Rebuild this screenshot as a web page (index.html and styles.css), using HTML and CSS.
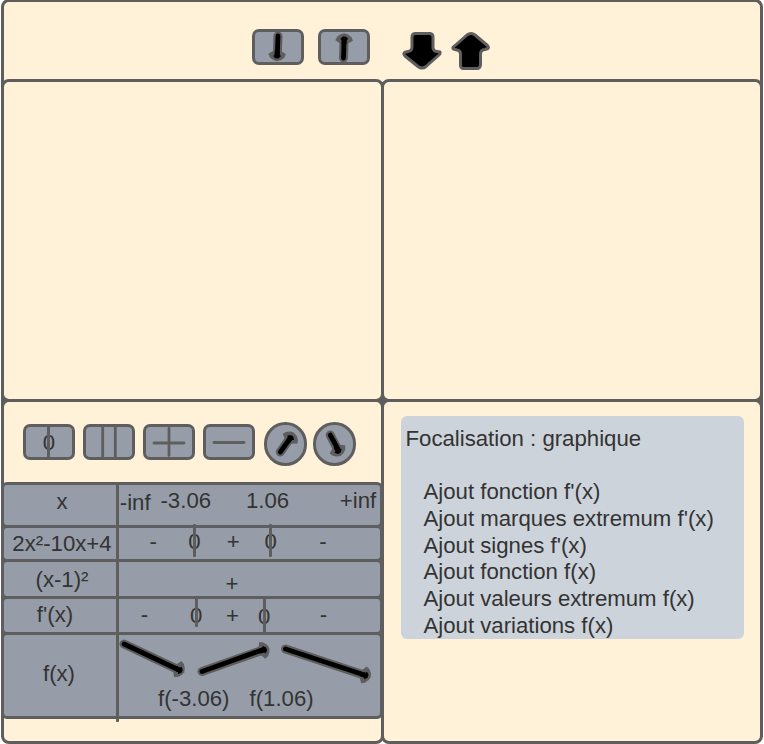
FILE: index.html
```
<!DOCTYPE html>
<html lang="fr">
<head>
<meta charset="utf-8">
<title>Tableau de variations</title>
<link rel="stylesheet" href="styles.css">
</head>
<body>
<svg class="defs" width="0" height="0" aria-hidden="true">
  <defs>
    <g id="head-edge"><path d="M-7 -8.800L-3.500 -7.200Q0 -4 0.300 0Q0 4 -3.500 7.200L-7 8.800L-10 4V-4Z"/></g>
    <g id="head-fill"><path d="M-9 -2.400L-5 -2.600L-4 -4L-1.500 -1.500V1.500L-4 4L-5 2.600L-9 2.400Z"/></g>
  </defs>
</svg>
<main class="app">
  <header class="panel top">
    <button class="btn"><svg viewBox="252 29 52 36"><path class="edge" d="M278 36L277.300 55"/><use class="hd" href="#head-edge" transform="translate(277 61) rotate(91)"/><path class="ink" d="M278 36L277.300 54"/><use href="#head-fill" transform="translate(277 60) rotate(91)"/></svg></button>
    <button class="btn up"><svg viewBox="318 29 52 36"><path class="edge" d="M343.500 58L344 40"/><use class="hd" href="#head-edge" transform="translate(344.300 33.500) rotate(-89)"/><path class="ink" d="M343.500 58L344 41"/><use href="#head-fill" transform="translate(344.300 35) rotate(-89)"/></svg></button>
    <svg class="big" width="40" height="40" viewBox="402 31 40 40"><path d="M415 33.500H430Q433 34 433 37V48Q433.500 51.500 437 51.500L440 52Q440.500 53.500 439 55L426 66.500Q422 69.500 418 66.500L405 56Q403 54 404.500 52.500L408 51.500Q412 51 412 47V37Q412 34 415 33.500Z"/></svg>
    <svg class="big second" width="40" height="40" viewBox="451 31 40 40"><path d="M474 68.500H463Q460.500 68 460.500 65V54Q460.500 50.500 457 50L453.500 49Q452 48 454 46.500L467 35Q471 32 475 35L487.500 45.500Q489 47 488 48.500L485 49.500Q480.500 50 480.500 54V65Q480 68.500 477 68.500Z"/></svg>
  </header>
  <section class="panel"></section>
  <section class="panel right"></section>
  <section class="panel lower">
    <div class="tools">
      <button class="btn zero"><span>0</span></button>
      <button class="btn"><svg viewBox="0 0 52 36"><path class="line" d="M19.700 0V36M32.300 0V36"/></svg></button>
      <button class="btn plus"><svg viewBox="0 0 52 36"><path class="line" d="M26 4.500V31.500M11 19H41"/></svg></button>
      <button class="btn"><svg viewBox="0 0 52 36"><path class="line" d="M11 18.500H41"/></svg></button>
      <button class="btn round"><svg viewBox="263.700 422 43.600 44"><path class="edge" d="M280 452L290.500 437"/><use class="hd" href="#head-edge" transform="translate(293.500 433) rotate(-57)"/><path class="ink" d="M280 452L290 438"/><use href="#head-fill" transform="translate(292.500 434.500) rotate(-57)"/></svg></button>
      <button class="btn round last"><svg viewBox="312.800 422 43.600 44"><path class="edge" d="M330 435L338 450.500"/><use class="hd" href="#head-edge" transform="translate(340.500 455.500) rotate(62)"/><path class="ink" d="M330 435L338 449.500"/><use href="#head-fill" transform="translate(339.800 454.500) rotate(62)"/></svg></button>
    </div>
    <div class="table">
      <div class="row r-x"><span class="label">x</span><div class="cells"><span class="low">-inf</span><span>-3.06</span><span>1.06</span><span>+inf</span></div></div>
      <div class="row r-poly"><span class="label">2x²-10x+4</span><div class="cells"><span>-</span><span class="root">0</span><span>+</span><span class="root">0</span><span>-</span></div></div>
      <div class="row r-square"><span class="label">(x-1)²</span><div class="cells"><span>+</span></div></div>
      <div class="row r-deriv"><span class="label">f'(x)</span><div class="cells"><span>-</span><span class="root down">0</span><span class="down">+</span><span class="root tall low">0</span><span>-</span></div></div>
      <div class="row r-fn"><span class="label">f(x)</span><div class="variations">
        <svg class="arrows" width="262" height="50" viewBox="118 635 262 50">
          <path class="edge" d="M124 644L179 670M202 671.500L263 650M285.500 649L364 675"/>
          <use class="hd" href="#head-edge" transform="translate(184 672) rotate(25)"/>
          <use class="hd" href="#head-edge" transform="translate(269 648) rotate(-20)"/>
          <use class="hd" href="#head-edge" transform="translate(370.500 677) rotate(18)"/>
          <path class="ink" d="M124 644L178 669.500M202 671.500L262 650M285.500 649L363 674.500"/>
          <use href="#head-fill" transform="translate(183.500 672) rotate(25)"/>
          <use href="#head-fill" transform="translate(268 648.300) rotate(-20)"/>
          <use href="#head-fill" transform="translate(369.500 676.700) rotate(18)"/>
        </svg>
        <div class="values"><span>f(-3.06)</span><span>f(1.06)</span></div>
      </div></div>
    </div>
  </section>
  <section class="panel right lower">
    <div class="focus">
      <p>Focalisation : graphique</p>
      <ul>
        <li>Ajout fonction f'(x)</li>
        <li>Ajout marques extremum f'(x)</li>
        <li>Ajout signes f'(x)</li>
        <li>Ajout fonction f(x)</li>
        <li>Ajout valeurs extremum f(x)</li>
        <li>Ajout variations f(x)</li>
      </ul>
    </div>
  </section>
</main>
</body>
</html>
```
FILE: styles.css
```
* { box-sizing: border-box; }
html { background: #fff; overflow: hidden; }
body {
  margin: 0;
  overflow: hidden;
  font: 22.2px/26px "Liberation Sans", Arial, sans-serif;
  color: #333;
}
.defs { display: block; }
.app {
  display: grid;
  grid-template-columns: 380px 379px;
  grid-template-rows: 80px 320px 342px;
  width: 764px;
  height: 745px;
  margin-top: -1px;
  padding-left: 1px;
  background:
    linear-gradient(#fff2d9, #fff2d9) 4px 8px / 756px 72px no-repeat,
    linear-gradient(#5e5e5e, #5e5e5e) 1px 8px / 762px 730px no-repeat;
}
.panel {
  margin: 0 -3px -3px 0;
  border: 3px solid #5e5e5e;
  border-radius: 8px;
  background: #fff2d9;
  min-width: 0;
}
.top {
  grid-column: 1 / 3;
  display: flex;
  padding: 27px 0 0 248px;
  border-bottom: 0;
  border-radius: 8px 8px 0 0;
}
.btn {
  display: block;
  flex: none;
  width: 52px;
  height: 36px;
  padding: 0;
  border: 3px solid #5e5e5e;
  border-radius: 7px;
  background: #979da8;
  font: inherit;
  color: inherit;
}
.btn svg { display: block; width: 52px; height: 36px; margin: -3px; }
.up { margin-left: 14px; }
.big { display: block; margin: 2px 0 0 32px; }
.big.second { margin-left: 9px; }
.big path { fill: #000; stroke: #5e5e5e; stroke-width: 3; stroke-linejoin: round; }
.edge { fill: none; stroke: #5e5e5e; stroke-width: 9; stroke-linecap: round; }
.hd { fill: #5e5e5e; }
.ink { fill: none; stroke: #000; stroke-width: 4.8; stroke-linecap: round; }
.line { fill: none; stroke: #5e5e5e; stroke-width: 2.8; stroke-linecap: round; }

.tools { display: flex; gap: 8px; height: 80px; padding: 22.400px 0 0 19px; }
.zero { position: relative; line-height: 32px; text-align: center; }
.zero::after {
  content: "";
  position: absolute;
  left: 21px;
  top: -1px;
  width: 3px;
  height: 34px;
  background: #5e5e5e;
}
.round { width: 43.600px; height: 43.600px; margin: -2px 0 0 0.700px; border-radius: 50%; }
.round svg { width: 43.600px; height: 44px; }
.round.last { margin-left: -2.500px; }

.table { position: relative; width: 382px; margin-left: -3px; }
.table::after {
  content: "";
  position: absolute;
  left: 115px;
  top: 1px;
  width: 3px;
  height: 239px;
  border-radius: 1px;
  background: #5e5e5e;
}
.row {
  display: flex;
  margin-bottom: -3px;
  border: 3px solid #5e5e5e;
  border-radius: 6px;
  background: #979da8;
  white-space: nowrap;
}
.label { width: 114px; flex: none; padding-left: 2px; text-align: center; }
.cells { display: grid; height: 26px; }
.low { padding-top: 2px; }
.r-x { height: 46px; }
.r-x .label { padding-top: 4px; }
.r-x .cells { grid-template-columns: 40.700px 85.500px 93.800px 38px; padding-left: 1.800px; margin-top: 3px; }
.r-poly { height: 37px; }
.r-poly .label { padding-top: 3px; }
.r-poly .cells { grid-template-columns: 38.700px 38.400px 37.900px 54.600px 8px; padding-left: 31.600px; margin-top: 1px; }
.r-square { height: 40px; }
.r-square .label { padding-top: 5px; }
.r-square .cells { padding: 9px 0 0 107.600px; }
.r-deriv { height: 39px; }
.r-deriv .label { padding: 3px 12px 0 0; }
.r-deriv .cells { grid-template-columns: 49.300px 36px 32px 61.700px 8px; padding-left: 22.700px; margin-top: 3px; }
.root { position: relative; }
.root::after {
  content: "";
  position: absolute;
  left: 4.800px;
  top: -5px;
  width: 3px;
  height: 33px;
  border-radius: 1px;
  background: #5e5e5e;
  z-index: 1;
}
.r-deriv .root::after { top: -6px; height: 31px; }
.r-deriv .tall::after { top: -6px; height: 38px; }
.down { padding-top: 1px; }
.r-fn { height: 87px; }
.r-fn .label { padding: 26px 4px 0 0; }
.arrows { display: block; overflow: visible; }
.values { display: flex; gap: 20px; padding: 1px 0 0 40px; }

.focus {
  width: 343px;
  height: 223px;
  margin: 14px 0 0 16.500px;
  padding: 10px 5px 0;
  border-radius: 6px;
  background: #cdd3db;
  line-height: 26.650px;
  white-space: nowrap;
}
.focus p { margin: 0 0 26.650px; }
.focus ul { margin: 0; padding: 0 0 0 18px; list-style: none; }
```
